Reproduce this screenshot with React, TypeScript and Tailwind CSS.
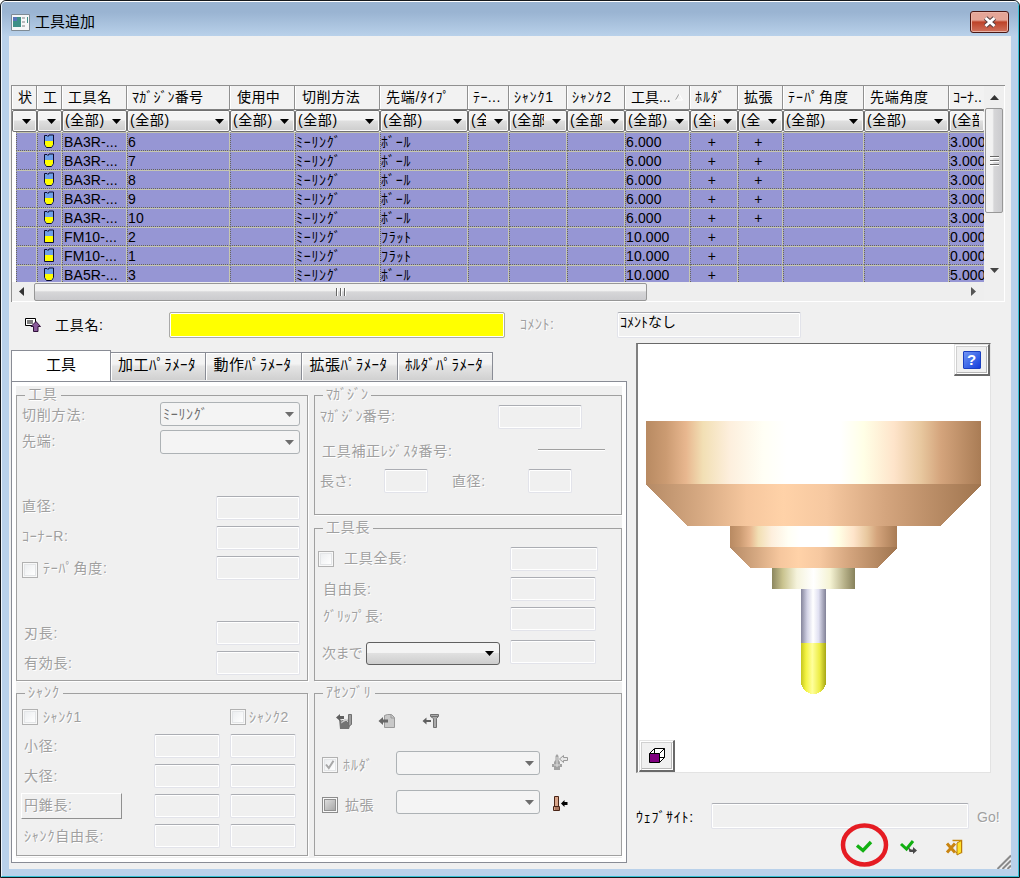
import React from "react";

type Kids = { children?: React.ReactNode };

const columns = [
  { label: "状", width: "w-[25px]", pad: "pl-[5px]", filter: "" },
  { label: "工", width: "w-[25px]", pad: "pl-[5px]", filter: "" },
  { label: "工具名", width: "w-[65px]", pad: "pl-[5px] tracking-[0.6px]", filter: "(全部)" },
  { label: "ﾏｶﾞｼﾞﾝ番号", width: "w-[103px]", pad: "pl-[4px] tracking-[0.2px]", filter: "(全部)" },
  { label: "使用中", width: "w-[65px]", pad: "pl-[6px] tracking-[0.4px]", filter: "(全部)" },
  { label: "切削方法", width: "w-[85px]", pad: "pl-[6px] tracking-[0.6px]", filter: "(全部)" },
  { label: "先端/ﾀｲﾌﾟ", width: "w-[88px]", pad: "pl-[5px] tracking-[0.7px]", filter: "(全部)" },
  { label: "ﾃｰ...", width: "w-[41px]", pad: "pl-[4px] tracking-[0.4px]", filter: "(全部)" },
  { label: "ｼｬﾝｸ1", width: "w-[58px]", pad: "pl-[4px] tracking-[0.8px]", filter: "(全部)" },
  { label: "ｼｬﾝｸ2", width: "w-[58px]", pad: "pl-[4px] tracking-[0.8px]", filter: "(全部)" },
  { label: "工具...", width: "w-[65px]", pad: "pl-[5px]", filter: "(全部)" },
  { label: "ﾎﾙﾀﾞ", width: "w-[48px]", pad: "pl-[4px] tracking-[0.9px]", filter: "(全部)" },
  { label: "拡張", width: "w-[45px]", pad: "pl-[5px] tracking-[0.4px]", filter: "(全部)" },
  { label: "ﾃｰﾊﾟ角度", width: "w-[81px]", pad: "pl-[4px] tracking-[1px]", filter: "(全部)" },
  { label: "先端角度", width: "w-[85px]", pad: "pl-[5px] tracking-[0.7px]", filter: "(全部)" },
  { label: "ｺｰﾅ..", width: "w-[36px]", pad: "pl-[3px]", filter: "(全部)" },
];

const tools = [
  { ball: true, name: "BA3R-...", mag: "6", dia: "6.000", ext: true, corner: "3.000" },
  { ball: true, name: "BA3R-...", mag: "7", dia: "6.000", ext: true, corner: "3.000" },
  { ball: true, name: "BA3R-...", mag: "8", dia: "6.000", ext: true, corner: "3.000" },
  { ball: true, name: "BA3R-...", mag: "9", dia: "6.000", ext: true, corner: "3.000" },
  { ball: true, name: "BA3R-...", mag: "10", dia: "6.000", ext: true, corner: "3.000" },
  { ball: false, name: "FM10-...", mag: "2", dia: "10.000", ext: false, corner: "0.000" },
  { ball: false, name: "FM10-...", mag: "1", dia: "10.000", ext: false, corner: "0.000" },
  { ball: true, name: "BA5R-...", mag: "3", dia: "10.000", ext: false, corner: "5.000" },
];

function Arrow({ className = "text-black" }: { className?: string }) {
  return (
    <svg width="9" height="5" viewBox="0 0 9 5" className={`shrink-0 ${className}`}>
      <path d="M0 0h9L4.500 5z" fill="currentColor" />
    </svg>
  );
}

function ToolGlyph({ ball }: { ball: boolean }) {
  const body = ball ? "M1.500 1.500H4L5 2.500L6 1H10.500V10.500L8.500 13.500H3.500L1.500 10.500z" : "M1.500 1.500H4L5 2.500L6 1H10.500V13.500H1.500z";
  const tip = ball ? "M2 7H10V10.500L8.300 13H3.700L2 10.500z" : "M2 7H10V13H2z";
  return (
    <svg width="12" height="15" viewBox="0 0 12 15" className="mt-[-2px] shrink-0">
      <path d={body} fill="#6f9fe8" stroke="#0c0c30" strokeWidth="1" />
      <path d={tip} fill="#ffff00" />
    </svg>
  );
}

function HeaderRow() {
  return (
    <div className="flex h-[23px] w-[972px] shrink-0 bg-[#f2f2f2]">
      {columns.map((c, i) => (
        <div key={i} className={`${c.width} ${c.pad} flex shrink-0 items-center overflow-hidden whitespace-nowrap border-r border-[#909090] border-l border-l-white pb-[1px]`}>
          {c.label}
          {i === 10 && (
            <svg width="8" height="8" viewBox="0 0 8 8" className="ml-[4px] shrink-0">
              <path d="M0.500 7L4 1" fill="none" stroke="#a0a0a0" />
              <path d="M4 1L7.500 7H0.500" fill="none" stroke="#fff" />
            </svg>
          )}
        </div>
      ))}
    </div>
  );
}

function FilterRow() {
  return (
    <div className="flex h-[23px] w-[972px] shrink-0 border-t border-[#808080]">
      {columns.map((c, i) => (
        <div
          key={i}
          className={`${c.width} flex shrink-0 items-center overflow-hidden rounded-[2px] border border-[#707070] bg-linear-to-b from-[#f4f4f4] from-45% via-[#dfdfdf] via-50% to-[#cdcdcd] pr-[5px] pl-[2px] shadow-[inset_0_0_0_1px_#fafafa]`}
        >
          <span className="min-w-0 flex-1 overflow-hidden whitespace-nowrap pb-[2px] tracking-[0.6px]">{c.filter}</span>
          {i < 15 && (
            <span className={`flex shrink-0 ${i < 2 ? "" : "pl-[8px]"}`}>
              <Arrow />
            </span>
          )}
        </div>
      ))}
    </div>
  );
}

function DataRow({ tool }: { tool: (typeof tools)[number] }) {
  const cells: React.ReactNode[] = [
    "",
    <ToolGlyph ball={tool.ball} />,
    tool.name,
    tool.mag,
    "",
    "ﾐｰﾘﾝｸﾞ",
    tool.ball ? "ﾎﾞｰﾙ" : "ﾌﾗｯﾄ",
    "",
    "",
    "",
    tool.dia,
    "+",
    tool.ext ? "+" : "",
    "",
    "",
    tool.corner,
  ];
  return (
    <div className="flex h-[19px] w-[972px] shrink-0 pl-[4px]">
      {cells.map((cell, i) => (
        <div
          key={i}
          className={`${i === 0 ? "w-[21px]" : columns[i].width} ${i === 1 ? "justify-center pr-[2px]" : ""} ${i === 11 || i === 12 ? "justify-center pr-[4px]" : ""} ${i === 2 ? "pl-[1px]" : ""} ${i === 5 || i === 6 ? "tracking-[0.7px]" : "tracking-[0.1px]"} flex shrink-0 items-center overflow-hidden whitespace-nowrap border-t border-r border-b border-l border-t-[#c6c6b0] border-r-[#c6c6b0] border-b-[#66665a] border-l-[#66665a] [border-bottom-style:dotted] [border-left-style:dotted] bg-[#9696d4] pt-px leading-[16px]`}
        >
          {cell}
        </div>
      ))}
    </div>
  );
}

function ToolTable() {
  return (
    <div className="ml-[2px] flex h-[217px] w-[994px] border-t border-l border-[#909090]">
      <div className="flex w-[972px] flex-col">
        <div className="flex h-[196px] flex-col overflow-hidden bg-white">
          <HeaderRow />
          <FilterRow />
          {tools.map((t, i) => (
            <DataRow key={i} tool={t} />
          ))}
        </div>
        <div className="flex h-[20px] items-center border-b border-white bg-[#eeeeee]">
          <div className="flex w-[22px] justify-center pr-1">
            <svg width="5" height="9" viewBox="0 0 5 9">
              <path d="M5 0v9L0 4.500z" fill="#333" />
            </svg>
          </div>
          <div className="flex h-[18px] w-[613px] items-center justify-center gap-[2px] rounded-[2px] border border-[#979797] bg-linear-to-b from-[#f2f2f2] from-40% via-[#d6d6d8] via-50% to-[#cbcbce]">
            <i className="h-[8px] w-[2px] border-r border-white bg-[#666]" />
            <i className="h-[8px] w-[2px] border-r border-white bg-[#666]" />
            <i className="h-[8px] w-[2px] border-r border-white bg-[#666]" />
          </div>
          <div className="flex flex-1 justify-end pr-[8px]">
            <svg width="5" height="9" viewBox="0 0 5 9">
              <path d="M0 0v9L5 4.500z" fill="#555" />
            </svg>
          </div>
        </div>
      </div>
      <div className="flex w-[21px] flex-col items-center border-r border-b border-white bg-[#efefef]">
        <div className="flex h-[22px] items-center">
          <svg width="9" height="5" viewBox="0 0 9 5">
            <path d="M0 5h9L4.500 0z" fill="#333" />
          </svg>
        </div>
        <div className="flex h-[105px] w-[18px] flex-col items-center justify-center gap-[2px] rounded-[2px] border border-[#979797] bg-linear-to-r from-[#f2f2f2] from-40% via-[#d6d6d8] via-50% to-[#cbcbce]">
          <i className="h-[2px] w-[9px] border-b border-white bg-[#666]" />
          <i className="h-[2px] w-[9px] border-b border-white bg-[#666]" />
          <i className="h-[2px] w-[9px] border-b border-white bg-[#666]" />
        </div>
        <div className="mt-[55px]">
          <Arrow className="text-[#444]" />
        </div>
      </div>
    </div>
  );
}

function Dim({ children, className = "" }: Kids & { className?: string }) {
  return <span className={`whitespace-nowrap text-[#a0a0a0] [text-shadow:1px_1px_0_white] ${className}`}>{children}</span>;
}

function Field({ className = "" }: { className?: string }) {
  return <div className={`h-[24px] shrink-0 rounded-[2px] border border-[#e2e3ea] border-t-[#abadb3] bg-[#f0f0f0] shadow-[inset_0_0_0_1px_white] ${className}`} />;
}

function Select({ className = "", children }: Kids & { className?: string }) {
  return (
    <div className={`flex h-[24px] shrink-0 items-center justify-between rounded-[3px] border border-[#adb2b5] bg-[#f4f4f4] pr-[5px] pl-[2px] text-[#6d6d6d] ${className}`}>
      <span className="pb-px tracking-[0.7px]">{children}</span>
      <Arrow className="text-[#6d6d6d]" />
    </div>
  );
}

function Check({ className = "", state = "off" }: { className?: string; state?: "off" | "on" | "mixed" }) {
  return (
    <div className={`flex size-[16px] shrink-0 border bg-[#f8f8f8] p-px ${state === "mixed" ? "border-[#8c8c8c]" : "border-[#b1b1b1]"} ${className}`}>
      <div className={`flex size-full items-center justify-center border ${state === "mixed" ? "border-[#909090] bg-linear-to-br from-[#dedede] to-[#a8a8a8]" : "border-[#e4e6e8] bg-linear-to-br from-[#eceef0] to-white"}`}>
        {state === "on" && (
          <svg width="10" height="10" viewBox="0 0 10 10">
            <path d="M1 4.500L3.800 8L8.500 0.800" fill="none" stroke="#a8a8a8" strokeWidth="2" />
          </svg>
        )}
      </div>
    </div>
  );
}

function Group({ title, className = "", legend = "", children }: Kids & { title: string; className?: string; legend?: string }) {
  return (
    <fieldset className={`min-w-0 border border-[#a0a0a0] shadow-[1px_1px_0_white] ${className}`}>
      <legend className={`h-[14px] px-[3px] leading-[13px] text-[#a0a0a0] [text-shadow:1px_1px_0_white] ${legend}`}>{title}</legend>
      {children}
    </fieldset>
  );
}

function Row({ className = "", children }: Kids & { className?: string }) {
  return <div className={`flex h-[24px] items-center ${className}`}>{children}</div>;
}

function ToolGroup() {
  return (
    <Group title="工具" className="h-[293px] w-[292px] pr-[7px] pl-[5px]" legend="ml-[3px] tracking-[0.8px]">
      <Row className="justify-between">
        <Dim className="pt-[2px] tracking-[0.8px]">切削方法:</Dim>
        <Select className="w-[140px]">ﾐｰﾘﾝｸﾞ</Select>
      </Row>
      <Row className="mt-[4px] justify-between">
        <Dim className="pb-[2px] tracking-[0.7px]">先端:</Dim>
        <Select className="w-[140px]" />
      </Row>
      <Row className="mt-[42px] justify-between">
        <Dim className="pb-1 tracking-[0.7px]">直径:</Dim>
        <Field className="w-[84px]" />
      </Row>
      <Row className="mt-[6px] justify-between">
        <Dim className="pb-1 tracking-[0.8px]">ｺｰﾅｰR:</Dim>
        <Field className="w-[84px]" />
      </Row>
      <Row className="mt-[6px]">
        <Check className="mt-1" />
        <Dim className="ml-[5px] flex-1 tracking-[0.8px]">ﾃｰﾊﾟ角度:</Dim>
        <Field className="w-[84px]" />
      </Row>
      <Row className="mt-[41px] justify-between pl-[2px]">
        <Dim className="tracking-[0.7px]">刃長:</Dim>
        <Field className="w-[84px]" />
      </Row>
      <Row className="mt-[6px] justify-between pl-[2px]">
        <Dim className="tracking-[0.7px]">有効長:</Dim>
        <Field className="w-[84px]" />
      </Row>
    </Group>
  );
}

function ShankRow({ label, button = false }: { label: string; button?: boolean }) {
  return (
    <Row className="mt-[6px]">
      <div className="w-[133px]">
        {button ? (
          <div className="flex h-[26px] w-[101px] items-center border border-white border-r-[#909090] border-b-[#909090] pl-[2px]">
            <Dim className="pb-[2px] tracking-[0.7px]">{label}</Dim>
          </div>
        ) : (
          <Dim className="pl-[3px] tracking-[0.8px]">{label}</Dim>
        )}
      </div>
      <Field className="w-[66px]" />
      <Field className="ml-[10px] w-[66px]" />
    </Row>
  );
}

function ShankGroup() {
  return (
    <Group title="ｼｬﾝｸ" className="mt-[5px] h-[170px] w-[292px] pl-[4px]" legend="ml-[4px] tracking-[1px]">
      <div className="flex h-[28px] items-center pt-[5px]">
        <Check className="ml-[1px]" />
        <Dim className="ml-[5px] w-[187px] tracking-[0.6px]">ｼｬﾝｸ1</Dim>
        <Check />
        <Dim className="ml-[3px] tracking-[0.9px]">ｼｬﾝｸ2</Dim>
      </div>
      <ShankRow label="小径:" />
      <ShankRow label="大径:" />
      <ShankRow label="円錐長:" button />
      <ShankRow label="ｼｬﾝｸ自由長:" />
    </Group>
  );
}

function MagazineGroup() {
  return (
    <Group title="ﾏｶﾞｼﾞﾝ" className="h-[127px] w-[308px] pl-[5px]" legend="ml-[3px]">
      <Row className="mt-[3px]">
        <Dim className="w-[178px] pb-[3px] tracking-[0.2px]">ﾏｶﾞｼﾞﾝ番号:</Dim>
        <Field className="w-[84px]" />
      </Row>
      <Row className="mt-[9px] pl-[2px]">
        <Dim className="w-[216px] pt-px tracking-[0.7px]">工具補正ﾚｼﾞｽﾀ番号:</Dim>
        <div className="mb-[1px] h-[2px] w-[67px] border-b border-white bg-[#a0a0a0]" />
      </Row>
      <Row className="mt-[7px]">
        <Dim className="w-[64px] pb-px">長さ:</Dim>
        <Field className="w-[44px]" />
        <Dim className="ml-[24px] w-[76px] pb-px tracking-[0.6px]">直径:</Dim>
        <Field className="w-[44px]" />
      </Row>
    </Group>
  );
}

function LengthGroup() {
  return (
    <Group title="工具長" className="mt-[6px] h-[160px] w-[308px] pl-[3px]" legend="ml-[5px] tracking-[0.8px]">
      <Row className="mt-[12px]">
        <Check />
        <Dim className="ml-[10px] w-[166px] pb-[3px] tracking-[0.7px]">工具全長:</Dim>
        <Field className="w-[88px]" />
      </Row>
      <Row className="mt-[6px] pl-[5px]">
        <Dim className="w-[187px] tracking-[0.7px]">自由長:</Dim>
        <Field className="w-[86px]" />
      </Row>
      <Row className="mt-[6px] pl-[5px]">
        <Dim className="w-[187px] pb-[7px]">ｸﾞﾘｯﾌﾟ長:</Dim>
        <Field className="w-[86px]" />
      </Row>
      <Row className="mt-[9px] pl-[4px]">
        <Dim className="w-[44px] pt-[2px] tracking-[-0.6px]">次まで</Dim>
        <div className="mt-[2px] flex h-[23px] w-[134px] items-center justify-end rounded-[3px] border border-[#606060] bg-linear-to-b from-[#f4f4f4] from-45% via-[#e0e0e0] via-50% to-[#cdcdcd] pr-[5px]">
          <Arrow />
        </div>
        <Field className="ml-[10px] w-[86px]" />
      </Row>
    </Group>
  );
}

function AssemblyGroup() {
  return (
    <Group title="ｱｾﾝﾌﾞﾘ" className="mt-[5px] h-[170px] w-[308px] pl-[7px]" legend="ml-[1px] tracking-[0.7px]">
      <div className="mt-[13px] flex h-[17px] pl-[14px]">
        <svg width="18" height="17" viewBox="0 0 18 17">
          <path d="M3 6l1 10h9l1-3V7l-5 1z" fill="#747474" />
          <path d="M0 4.500L4 1v2h4v3H4v2z" fill="#606060" />
          <path d="M5 7.500l2 1.500 2-3 3 3M5 10l7-4" fill="none" stroke="#c8c8c8" />
          <path d="M12.500 1.500h3v10l-3 2z" fill="#9c9c9c" stroke="#707070" />
        </svg>
        <svg width="18" height="17" viewBox="0 0 18 17" className="ml-[24px]">
          <path d="M6.500 2.500L9.500 1.500H13.500L16.500 4.500V14.500H6.500z" fill="#c8c8c8" stroke="#999" />
          <path d="M13 2v3h3" fill="none" stroke="#999" />
          <path d="M0.500 8L5 4v2.500h5v3H5V12z" fill="#666" />
        </svg>
        <svg width="18" height="17" viewBox="0 0 18 17" className="ml-[26px]">
          <path d="M8.500 1.500h8v2l-2 2v9h-3v-9l-3-2z" fill="#aaa" stroke="#717171" />
          <path d="M9 3.500h7" stroke="#717171" />
          <path d="M0.500 8L4.500 4.500v2.500H9v2H4.500v2.500z" fill="#606060" />
        </svg>
      </div>
      <Row className="mt-[21px]">
        <Check state="on" className="mt-[3px]" />
        <Dim className="ml-[5px] w-[53px] pt-[4px] tracking-[0.9px]">ﾎﾙﾀﾞ</Dim>
        <Select className="w-[144px]" />
        <svg width="18" height="17" viewBox="0 0 18 17" className="mb-px ml-[11px]">
          <path d="M4.500 2v4L3 8v2H1v3h2v3h6v-3h2v-3H9V8L7.500 6V2L6 0z" fill="#a2a2a2" />
          <path d="M6 3v10M3 11h6" stroke="#ddd" />
          <path d="M8.500 5L12.500 1.500V3.500H16.500V6.500H12.500V8.500z" fill="#e8e8e8" stroke="#999" />
        </svg>
      </Row>
      <Row className="mt-[15px]">
        <Check state="mixed" className="mt-[5px]" />
        <Dim className="ml-[7px] w-[51px] pt-[6px] tracking-[0.6px]">拡張</Dim>
        <Select className="w-[144px]" />
        <svg width="18" height="17" viewBox="0 0 18 17" className="mt-[3px] ml-[11px]">
          <path d="M3.500 1.500h4v10h-4zM2.500 11.500h6v4h-6z" fill="#d9a58a" stroke="#4a2416" />
          <path d="M5 12v3M7 12v3" stroke="#7a4632" />
          <path d="M10 8.500L13.500 5v2h3v3h-3v2z" fill="#000" />
        </svg>
      </Row>
    </Group>
  );
}

function Tabs() {
  const rest = [
    { label: "加工ﾊﾟﾗﾒｰﾀ", width: "w-[95px]" },
    { label: "動作ﾊﾟﾗﾒｰﾀ", width: "w-[96px]" },
    { label: "拡張ﾊﾟﾗﾒｰﾀ", width: "w-[96px]" },
    { label: "ﾎﾙﾀﾞﾊﾟﾗﾒｰﾀ", width: "w-[95px]" },
  ];
  return (
    <div className="flex h-[31px] items-end">
      <div className="flex h-[31px] w-[100px] items-center justify-center border border-b-0 border-[#898c95] bg-white pb-[3px] text-[15px]">工具</div>
      {rest.map((t) => (
        <div key={t.label} className={`${t.width} mb-px flex h-[28px] items-center justify-center whitespace-nowrap border border-b-0 border-l-0 border-[#898c95] bg-linear-to-b from-[#f3f3f3] from-40% via-[#e4e4e4] via-50% to-[#d0d0d0] pr-[2px] pb-[4px] text-[15px] tracking-[0.4px] shadow-[inset_1px_1px_0_white]`}>
          {t.label}
        </div>
      ))}
    </div>
  );
}

function ToolPreview() {
  return (
    <svg width="352" height="364" viewBox="638 376 352 364" className="block shrink-0" shapeRendering="crispEdges">
      <defs>
        <linearGradient id="steel">
          <stop offset="0" stopColor="#b88a62" />
          <stop offset=".06" stopColor="#cb9b72" />
          <stop offset=".12" stopColor="#e8b78f" />
          <stop offset=".17" stopColor="#f2dfb4" />
          <stop offset=".25" stopColor="#fdefdd" />
          <stop offset=".35" stopColor="#fffff5" />
          <stop offset=".42" stopColor="#fff" />
          <stop offset=".58" stopColor="#fff" />
          <stop offset=".65" stopColor="#ffffe6" />
          <stop offset=".74" stopColor="#fee4ca" />
          <stop offset=".82" stopColor="#e8c89f" />
          <stop offset=".88" stopColor="#d4a47c" />
          <stop offset="1" stopColor="#a97c55" />
        </linearGradient>
        <linearGradient id="cone">
          <stop offset="0" stopColor="#b58a65" />
          <stop offset=".16" stopColor="#d6a982" />
          <stop offset=".3" stopColor="#f6c79e" />
          <stop offset=".41" stopColor="#ffd2a8" />
          <stop offset=".54" stopColor="#f6c8a0" />
          <stop offset=".72" stopColor="#d3a47d" />
          <stop offset="1" stopColor="#a0754f" />
        </linearGradient>
        <linearGradient id="collar">
          <stop offset="0" stopColor="#8c875f" />
          <stop offset=".13" stopColor="#c9c38f" />
          <stop offset=".3" stopColor="#f5f3dc" />
          <stop offset=".5" stopColor="#fff" />
          <stop offset=".7" stopColor="#f5f3d4" />
          <stop offset=".87" stopColor="#b8b28a" />
          <stop offset="1" stopColor="#87815b" />
        </linearGradient>
        <linearGradient id="shaft">
          <stop offset="0" stopColor="#85859c" />
          <stop offset=".25" stopColor="#d3d3e6" />
          <stop offset=".48" stopColor="#fff" />
          <stop offset=".7" stopColor="#e1e1f2" />
          <stop offset="1" stopColor="#818197" />
        </linearGradient>
        <linearGradient id="cutter">
          <stop offset="0" stopColor="#c6c620" />
          <stop offset=".2" stopColor="#f3f342" />
          <stop offset=".45" stopColor="#ffff9c" />
          <stop offset=".75" stopColor="#ecec44" />
          <stop offset="1" stopColor="#a6a614" />
        </linearGradient>
      </defs>
      <path d="M646 421H981V484H646z" fill="url(#steel)" />
      <path d="M646 484H981V485L940 526H687L646 485z" fill="url(#cone)" />
      <path d="M730 526H897V547H730z" fill="url(#steel)" />
      <path d="M730 547H897V548L877 568H750L730 548z" fill="url(#cone)" />
      <path d="M772 568H855V589H772z" fill="url(#collar)" />
      <path d="M801 589H826V643H801z" fill="url(#shaft)" />
      <path d="M801 643H826V681.500A12.500 12.500 0 0 1 801 681.500z" fill="url(#cutter)" />
    </svg>
  );
}

function Preview() {
  const btn = "flex h-[32px] w-[36px] items-center justify-center border border-[#e3e3e3] border-r-2 border-b-2 border-r-[#696969] border-b-[#696969] bg-[#f0f0f0] shadow-[inset_1px_1px_0_white,inset_2px_2px_0_#d0d0d0,inset_-1px_-1px_0_white,inset_-2px_-2px_0_#b8b8b8]";
  return (
    <div className="flex h-[430px] w-[355px] flex-col border border-t-[#696969] border-l-2 border-l-[#808080] border-r-[#e3e3e3] border-b-[#e3e3e3] bg-white">
      <div className="flex justify-end">
        <div className={btn}>
          <div className="flex size-[18px] items-center justify-center rounded-[1px] border border-[#1a3fc0] bg-linear-to-br from-[#7294f4] to-[#1438dc] text-[15px] leading-none font-bold text-white">?</div>
        </div>
      </div>
      <ToolPreview />
      <div className="flex pl-px">
        <div className={btn}>
          <svg width="18" height="17" viewBox="0 0 18 17">
            <path d="M1.500 6.500L6.500 1.500H16.500V10.500L11.500 15.500" fill="#fff" stroke="#000" />
            <path d="M11.500 6.500L16.500 1.500M6.500 2v5M11.500 10.500h5" stroke="#000" />
            <path d="M1.500 6.500h10v9h-10z" fill="#800080" stroke="#000" />
          </svg>
        </div>
      </div>
    </div>
  );
}

function Actions() {
  return (
    <svg width="180" height="46" viewBox="831 823 180 46" className="block self-end">
      <ellipse cx="864.500" cy="845" rx="21.500" ry="19.500" fill="none" stroke="#e51c23" strokeWidth="4.500" />
      <path d="M857 845.500L863 850.500L871 842" fill="none" stroke="#12b012" strokeWidth="3.400" />
      <path d="M901 844L906.500 849L913 841" fill="none" stroke="#12b012" strokeWidth="3" />
      <path d="M908 847l3 2.500h2v-2.500l4 3.500-4 3.500v-2h-3.500z" fill="#4a4a4a" />
      <path d="M952.500 840.500h9v12h-6" fill="none" stroke="#c8890c" strokeWidth="1.500" />
      <path d="M957 843l4.500-2.500v12l-4.500 2.500z" fill="#ffe128" stroke="#b97a0a" />
      <path d="M947 843.500l8 9M955 843.500l-8 9" stroke="#c98410" strokeWidth="3" />
      <path d="M997.500 869L1011 855.500M1002.500 869L1011 860.500M1007.500 869L1011 865.500" stroke="#8a8a8a" strokeWidth="2" />
    </svg>
  );
}

export default function App() {
  return (
    <div className="flex h-[878px] w-[1020px] flex-col overflow-hidden rounded-t-[6px] border border-[#15181c] bg-[#b9d1ea] text-[14px] leading-[18px] text-black [font-family:'Liberation_Sans','Noto_Sans_CJK_JP',sans-serif]">
      <div className="flex min-h-0 flex-1 flex-col rounded-t-[5px] border border-t-white border-r-[#35c0d4] border-b-[#35c0d4] border-l-[#eef5fc]">
        <header className="flex h-[34px] shrink-0 items-start justify-between rounded-t-[4px] bg-linear-to-b from-[#9ab4d2] from-30% to-[#b9d1ea] pr-[9px] pl-[9px]">
          <div className="flex items-center gap-[5px] pt-[11px]">
            <svg width="19" height="17" viewBox="0 0 19 17">
              <path d="M.5.5h18v16H.5z" fill="#f5f7f8" stroke="#7e8a94" />
              <path d="M2 3h8v10H2z" fill="#3d8f87" />
              <path d="M2 3h4v4H2z" fill="#5674b8" />
              <path d="M11 3h3v2h-3zM11 7h3v2h-3zM11 11h3v2h-3z" fill="#b9bcbe" />
              <path d="M16 3h1v6h-1z" fill="#3d8f87" />
            </svg>
            <h1 className="text-[15px] leading-[18px] font-normal">工具追加</h1>
          </div>
          <div className="mt-[9px] flex h-[22px] w-[39px] items-center justify-center rounded-[3px] border border-[#4a1714] bg-linear-to-b from-[#e4a597] from-40% via-[#bd4228] via-50% to-[#d0715c] shadow-[inset_0_0_0_1px_#e9b4a8]">
            <svg width="16" height="12" viewBox="0 0 16 12">
              <path d="M3.500 2l9 8M12.500 2l-9 8" stroke="#5a4040" strokeWidth="5" />
              <path d="M3.500 2l9 8M12.500 2l-9 8" stroke="#fff" strokeWidth="3" />
            </svg>
          </div>
        </header>
        <main className="mx-[7px] mb-[7px] flex min-h-0 flex-1 flex-col bg-[#f0f0f0] pt-[49px]">
          <ToolTable />
          <div className="mt-[10px] flex h-[26px] shrink-0 items-center pl-[16px]">
            <svg width="17" height="16" viewBox="0 0 17 16">
              <path d="M.5 1.500h10v7H.5zM2 4h6M2 6h6" fill="#fff" stroke="#000" />
              <path d="M8.500 14.500v-5h-2.500l5-5 4.500 5h-2.500v5z" fill="#8a5a9a" stroke="#30103a" />
            </svg>
            <span className="ml-[13px] w-[114px] tracking-[0.7px]">工具名:</span>
            <div className="h-[26px] w-[336px] rounded-[2px] border border-[#a9a9a9] bg-[#ffff00] shadow-[inset_0_0_0_1px_white]" />
            <Dim className="ml-[15px] w-[97px] pb-[3px] tracking-[0.5px]">ｺﾒﾝﾄ:</Dim>
            <div className="flex h-[26px] w-[184px] rounded-[2px] border border-[#e2e3ea] border-t-[#abadb3] pl-[2px] shadow-[inset_0_0_0_1px_white]">ｺﾒﾝﾄなし</div>
          </div>
          <div className="flex min-h-0 flex-1">
            <div className="ml-[2px] flex w-[616px] flex-col pt-[12px]">
              <Tabs />
              <div className="h-[482px] border border-[#898c95] bg-white p-[4px]">
                <div className="flex h-full gap-[6px] bg-[#f0f0f0] pt-[2px]">
                  <div className="flex flex-col">
                    <ToolGroup />
                    <ShankGroup />
                  </div>
                  <div className="flex flex-col">
                    <MagazineGroup />
                    <LengthGroup />
                    <AssemblyGroup />
                  </div>
                </div>
              </div>
            </div>
            <div className="flex flex-1 flex-col pt-[5px] pl-[9px]">
              <Preview />
              <div className="mt-[30px] flex h-[26px] items-center">
                <span className="w-[75px] whitespace-nowrap pt-[2px] tracking-[0.7px]">ｳｪﾌﾞｻｲﾄ:</span>
                <Field className="h-[26px] w-[258px]" />
                <Dim className="ml-[8px] pt-[2px]">Go!</Dim>
              </div>
              <div className="mt-[-6px] flex justify-end">
                <Actions />
              </div>
            </div>
          </div>
        </main>
      </div>
    </div>
  );
}
